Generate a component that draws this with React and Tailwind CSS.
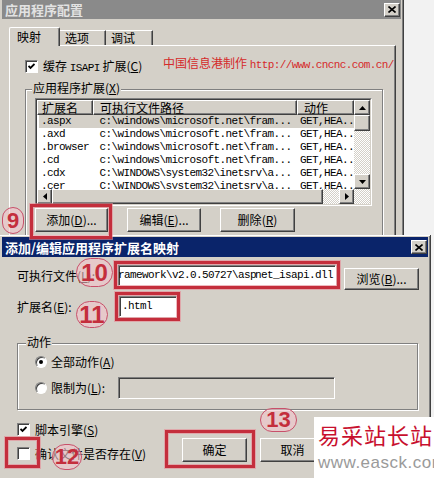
import React from "react";

const RAISED =
  "bg-[#d4d0c8] border border-t-white border-l-white border-b-[#404040] border-r-[#404040] shadow-[inset_-1px_-1px_0_#808080]";
const SUNKEN =
  "border border-t-[#808080] border-l-[#808080] border-b-white border-r-white shadow-[inset_1px_1px_0_#404040]";
const ETCHED = "border border-[#808080] shadow-[inset_1px_1px_0_#fff,1px_1px_0_#fff]";
const CJK = "font-['Noto_Sans_CJK_SC',sans-serif]";
const MONO = "font-['Liberation_Mono','Noto_Sans_CJK_SC',monospace] text-[11px] tracking-[-0.6px]";
const HATCH =
  "bg-[image:repeating-conic-gradient(#d4d0c8_0_25%,#ffffff_0_50%)] bg-[length:2px_2px]";

const ROWS = [
  [".aspx", "c:\\windows\\microsoft.net\\fram...", "GET,HEA.."],
  [".axd", "c:\\windows\\microsoft.net\\fram...", "GET,HEA.."],
  [".browser", "c:\\windows\\microsoft.net\\fram...", "GET,HEA.."],
  [".cd", "c:\\windows\\microsoft.net\\fram...", "GET,HEA.."],
  [".cdx", "C:\\WINDOWS\\system32\\inetsrv\\a...", "GET,HEA.."],
  [".cer", "C:\\WINDOWS\\system32\\inetsrv\\a...", "GET,HEA.."],
];

// mnemonic letter, e.g. (D)
const K = ({ c }) => (
  <>
    (<u className="underline-offset-1">{c}</u>)
  </>
);

function CloseBtn() {
  return (
    <div className={`${RAISED} w-[16px] h-[14px] flex items-center justify-center`}>
      <svg width="8" height="7" viewBox="0 0 8 7">
        <path d="M0.5 0.5 L7.5 6.5 M7.5 0.5 L0.5 6.5" stroke="#000" strokeWidth="1.6" />
      </svg>
    </div>
  );
}

function Arrow({ dir }) {
  const vert = dir === "up" || dir === "down";
  const d = {
    up: "M0 4 L3.5 0 L7 4Z",
    down: "M0 0 L3.5 4 L7 0Z",
    left: "M4 0 L0 3.5 L4 7Z",
    right: "M0 0 L4 3.5 L0 7Z",
  }[dir];
  return (
    <svg width={vert ? 7 : 4} height={vert ? 4 : 7} viewBox={vert ? "0 0 7 4" : "0 0 4 7"}>
      <path d={d} fill="#000" />
    </svg>
  );
}

function Check({ checked }) {
  return (
    <div className={`${SUNKEN} w-[13px] h-[13px] bg-white flex items-center justify-center shrink-0`}>
      {checked && (
        <svg width="7" height="7" viewBox="0 0 7 7">
          <path d="M0.5 3 L2.5 5 L6.5 1" stroke="#000" strokeWidth="1.8" fill="none" />
        </svg>
      )}
    </div>
  );
}

function Radio({ on }) {
  return (
    <div className="w-[12px] h-[12px] rounded-full bg-white border border-t-[#808080] border-l-[#808080] border-b-white border-r-white shadow-[inset_1px_1px_0_#404040] flex items-center justify-center shrink-0">
      {on && <div className="w-[4px] h-[4px] rounded-full bg-black" />}
    </div>
  );
}

function Btn({ className, children }) {
  return (
    <div className={`${RAISED} ${className} flex items-center justify-center leading-none`}>
      {children}
    </div>
  );
}

function ListView() {
  return (
    <div className="w-[337px] h-[108px] border border-t-[#808080] border-l-[#808080] border-b-white border-r-white">
      <div className="h-full border border-t-[#404040] border-l-[#404040] border-b-[#d4d0c8] border-r-[#d4d0c8] bg-white flex">
        <div className="w-[317px] flex flex-col">
          <div className="flex h-[15px] shrink-0 leading-[13px]">
            <div className={`${RAISED} w-[56px] pl-[4px]`}>扩展名</div>
            <div className={`${RAISED} w-[204px] pl-[6px]`}>可执行文件路径</div>
            <div className={`${RAISED} w-[57px] pl-[6px]`}>动作</div>
          </div>
          <div className="flex-1 overflow-hidden">
            {ROWS.map((r, i) => (
              <div
                key={i}
                className={`ml-[2px] flex h-[13px] items-center leading-none ${MONO} ${
                  i === 0 ? "bg-[#d4d0c8]" : ""
                }`}
              >
                <span className="w-[54px] pl-[2px]">{r[0]}</span>
                <span className="w-[204px] pl-[7px] whitespace-nowrap">{r[1]}</span>
                <span className="pl-[6px]">{r[2]}</span>
              </div>
            ))}
          </div>
          <div className={`h-[15px] flex shrink-0 ${HATCH}`}>
            <div className={`${RAISED} w-[15px] flex items-center justify-center`}>
              <Arrow dir="left" />
            </div>
            <div className={`${RAISED} w-[271px]`} />
            <div className="flex-1" />
            <div className={`${RAISED} w-[15px] flex items-center justify-center`}>
              <Arrow dir="right" />
            </div>
          </div>
        </div>
        <div className={`w-[16px] flex flex-col ${HATCH}`}>
          <div className={`${RAISED} h-[15px] flex items-center justify-center`}>
            <Arrow dir="up" />
          </div>
          <div className={`${RAISED} h-[16px]`} />
          <div className="flex-1" />
          <div className={`${RAISED} h-[15px] flex items-center justify-center`}>
            <Arrow dir="down" />
          </div>
          <div className="h-[15px]" />
        </div>
      </div>
    </div>
  );
}

function AppConfigDialog() {
  return (
    <div className="w-[404px] h-[235px] overflow-hidden bg-[#d4d0c8] px-[2px] border-r border-r-[#404040] shadow-[inset_-1px_0_0_#808080]">
      <div className="h-[19px] bg-[#8a8a8a] flex items-center justify-between pl-[3px] pr-[1px]">
        <span className="text-[13px] font-bold text-[#e2e2e2] leading-none">应用程序配置</span>
        <CloseBtn />
      </div>

      {/* tabs */}
      <div className="flex items-end h-[19px] mt-[8px] -mb-[1px] ml-[7px] relative z-10 leading-[14px]">
        <div className="h-[19px] w-[51px] bg-[#d4d0c8] border-t border-l border-r border-t-white border-l-white border-r-[#404040] shadow-[inset_-1px_0_0_#808080] rounded-t-[2px] pl-[7px] pt-[2px]">
          映射
        </div>
        <div className="h-[15px] w-[46px] mb-[1px] border-t border-r border-t-white border-r-[#404040] shadow-[inset_-1px_0_0_#808080] pl-[5px]">
          选项
        </div>
        <div className="h-[15px] w-[47px] mb-[1px] border-t border-r border-t-white border-r-[#404040] shadow-[inset_-1px_0_0_#808080] pl-[5px]">
          调试
        </div>
      </div>

      <div className="ml-[7px] w-[387px] h-[200px] border-t border-l border-r border-t-white border-l-white border-r-[#404040] shadow-[inset_-1px_0_0_#808080] pt-[14px] pl-[15px]">
        <div className="flex items-center h-[13px] leading-none">
          <div className="flex items-center w-[138px]">
            <Check checked />
            <span className="ml-[5px] whitespace-nowrap">
              缓存 <span className={MONO}>ISAPI</span> 扩展<K c="C" />
            </span>
          </div>
          <span className="text-[#d42a2a] whitespace-nowrap -mt-[5px]">
            中国信息港制作 <span className={MONO}>http://www.cncnc.com.cn/</span>
          </span>
        </div>

        <div className={`relative mt-[16px] w-[358px] h-[160px] ${ETCHED} pt-[8px] pl-[9px]`}>
          <span className="absolute -top-[9px] left-[6px] bg-[#d4d0c8] px-[1px] leading-[14px]">
            应用程序扩展<K c="X" />
          </span>
          <ListView />
          <div className="flex gap-[19px] mt-[2px]">
            <Btn className="w-[73px] h-[24px]">
              添加<K c="D" />...
            </Btn>
            <Btn className="w-[74px] h-[24px]">
              编辑<K c="E" />...
            </Btn>
            <Btn className="w-[75px] h-[24px]">
              删除<K c="R" />
            </Btn>
          </div>
        </div>
      </div>
    </div>
  );
}

function MappingDialog() {
  return (
    <div className="w-[431px] h-[243px] bg-[#d4d0c8] pt-[2px] px-[2px] border-r border-r-[#404040] shadow-[inset_0_1px_0_#fff,inset_-1px_0_0_#808080]">
      <div className="h-[20px] bg-[#0a246a] flex items-center justify-between pl-[3px] pr-[1px]">
        <span className="text-[13px] font-bold text-white leading-none">添加/编辑应用程序扩展名映射</span>
        <CloseBtn />
      </div>

      <div className="flex items-start mt-[8px]">
        <span className="w-[116px] pl-[15px] mt-[4px] leading-[14px]">
          可执行文件<K c="L" />:
        </span>
        <div className={`${SUNKEN} bg-white w-[218px] h-[21px] overflow-hidden flex items-center justify-end pr-[2px] whitespace-nowrap leading-none ${MONO}`}>
          <span>Framework\v2.0.50727\asp</span>
          <span className="inline-block w-px h-[13px] bg-black -mr-px" />
          <span>net_isapi.dll</span>
        </div>
        <Btn className="ml-[8px] mt-[3px] w-[75px] h-[22px]">
          浏览<K c="B" />...
        </Btn>
      </div>

      <div className="flex items-start mt-[6px]">
        <span className="w-[117px] pl-[15px] mt-[4px] leading-[14px]">
          扩展名<K c="E" />:
        </span>
        <div className={`${SUNKEN} bg-white w-[58px] h-[21px] flex items-center pl-[2px] leading-none ${MONO}`}>
          .html
        </div>
      </div>

      <div className={`relative mt-[26px] ml-[15px] w-[401px] h-[67px] ${ETCHED} pt-[11px] pl-[17px]`}>
        <span className="absolute -top-[9px] left-[8px] bg-[#d4d0c8] px-[1px] leading-[14px]">动作</span>
        <div className="flex items-center h-[14px] leading-none">
          <Radio on />
          <span className="ml-[4px]">
            全部动作<K c="A" />
          </span>
        </div>
        <div className="flex items-center mt-[8px] leading-none">
          <div className="flex items-center w-[83px]">
            <Radio />
            <span className="ml-[4px]">
              限制为<K c="L" />:
            </span>
          </div>
          <div className={`${SUNKEN} w-[217px] h-[22px] bg-[#d4d0c8]`} />
        </div>
      </div>

      <div className="flex">
        <div className="w-[180px] pl-[15px] pt-[13px] leading-none">
          <div className="flex items-center h-[13px]">
            <Check checked />
            <span className="ml-[5px]">
              脚本引擎<K c="S" />
            </span>
          </div>
          <div className="flex items-center h-[13px] mt-[11px]">
            <Check />
            <span className="ml-[5px]">
              确认文件是否存在<K c="V" />
            </span>
          </div>
        </div>
        <div className="flex gap-[13px] mt-[28px]">
          <Btn className="w-[65px] h-[24px]">确定</Btn>
          <Btn className="w-[65px] h-[24px]">取消</Btn>
        </div>
      </div>
    </div>
  );
}

const BOX =
  "absolute border-[3px] border-[#c42e3c] shadow-[0_0_0_1px_rgba(230,140,150,0.6),inset_0_0_0_1px_rgba(230,140,150,0.6)]";
const BADGE =
  "absolute rounded-full border border-[#c8506a] bg-[#f2c4cc]/60 flex items-center justify-center text-[#c42e3c] font-bold font-['Liberation_Sans',sans-serif] leading-none";

export default function App() {
  return (
    <div className={`relative w-[434px] h-[478px] overflow-hidden bg-[#f2f2f2] ${CJK} text-[12px] text-black`}>
      <AppConfigDialog />
      <MappingDialog />

      {/* annotation boxes */}
      <div className={`${BOX} left-[30px] top-[204px] w-[82px] h-[35px]`} />
      <div className={`${BOX} left-[114px] top-[261px] w-[226px] h-[28px]`} />
      <div className={`${BOX} left-[115px] top-[292px] w-[65px] h-[29px]`} />
      <div className={`${BOX} left-[5px] top-[437px] w-[35px] h-[31px]`} />
      <div className={`${BOX} left-[165px] top-[430px] w-[90px] h-[38px]`} />

      {/* step numbers */}
      <div className={`${BADGE} left-[2px] top-[207px] w-[22px] h-[27px] text-[22px]`}>9</div>
      <div className={`${BADGE} left-[76px] top-[258px] w-[37px] h-[29px] text-[24px]`}>10</div>
      <div className={`${BADGE} left-[76px] top-[301px] w-[32px] h-[27px] text-[24px]`}>11</div>
      <div className={`${BADGE} left-[52px] top-[444px] w-[30px] h-[26px] text-[22px]`}>12</div>
      <div className={`${BADGE} left-[260px] top-[408px] w-[37px] h-[24px] text-[22px]`}>13</div>

      {/* watermark */}
      <div className="absolute left-[314px] top-[417px] w-[120px] h-[61px] bg-white pl-[4px] pt-[6px] whitespace-nowrap">
        <div className="text-[#c8102e] text-[22px] tracking-[1px] leading-none">易采站长站</div>
        <div className="mt-[9px] text-[#9a9a9a] text-[17px] tracking-[0.5px] leading-none font-['Liberation_Sans',sans-serif]">
          www.easck.com
        </div>
      </div>
    </div>
  );
}
